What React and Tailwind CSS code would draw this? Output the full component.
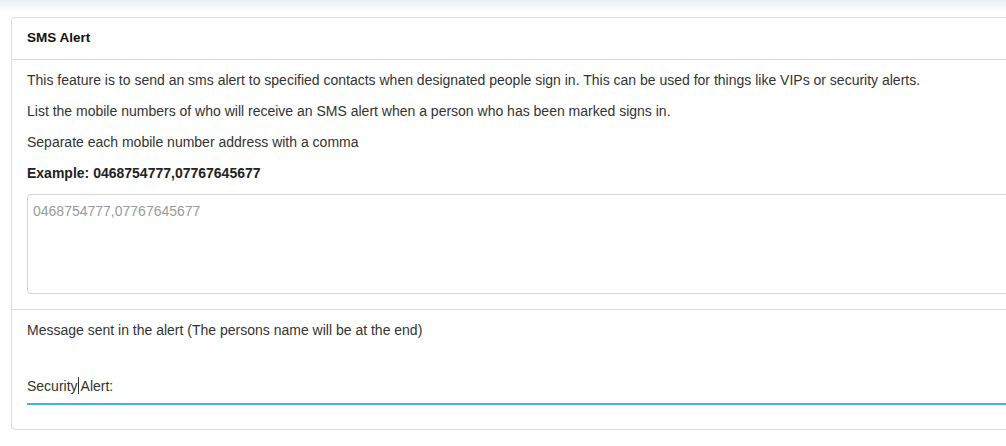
export default function App() {
  return (
    <div className="w-[1006px] h-[446px] overflow-hidden bg-white text-[#333] text-[14px]" style={{ fontFamily: '"Liberation Sans", Arial, sans-serif' }}>
      <div className="h-[12px] bg-gradient-to-b from-[#eaeff3] to-white" />
      <div className="pl-[11px] pt-[5px]">
        <div className="w-[1020px] border border-[#dcdcdc] rounded-[4px] bg-white">
          <div className="h-[42px] flex items-center px-[15px] border-b border-[#dcdcdc] font-bold text-[13.5px] text-[#111]">
            SMS Alert
          </div>
          <div className="px-[15px] pt-[10px] pb-[15px] border-b border-[#dcdcdc]">
            <p className="leading-[20px] mb-[11px]">This feature is to send an sms alert to specified contacts when designated people sign in. This can be used for things like VIPs or security alerts.</p>
            <p className="leading-[20px] mb-[11px]">List the mobile numbers of who will receive an SMS alert when a person who has been marked signs in.</p>
            <p className="leading-[20px] mb-[11px]">Separate each mobile number address with a comma</p>
            <p className="leading-[20px] mb-[11px] font-bold text-[#222]">Example: 0468754777,07767645677</p>
            <div className="h-[100px] w-[1000px] border border-[#d6d6d6] rounded-[4px] px-[5px] pt-[6px] text-[#9a9a9a] leading-[20px]">
              0468754777,07767645677
            </div>
          </div>
          <div className="px-[15px] pt-[10px] pb-[24px]">
            <p className="leading-[20px]">Message sent in the alert (The persons name will be at the end)</p>
            <div className="mt-[36px] w-[1000px] border-b-2 border-[#3fb4e5] pb-[7px] leading-[20px] text-[#333]">
              Security<span className="inline-block w-[1px] h-[17px] bg-[#333] align-[-3px] mr-[2px]" />Alert:
            </div>
          </div>
        </div>
      </div>
    </div>
  );
}
